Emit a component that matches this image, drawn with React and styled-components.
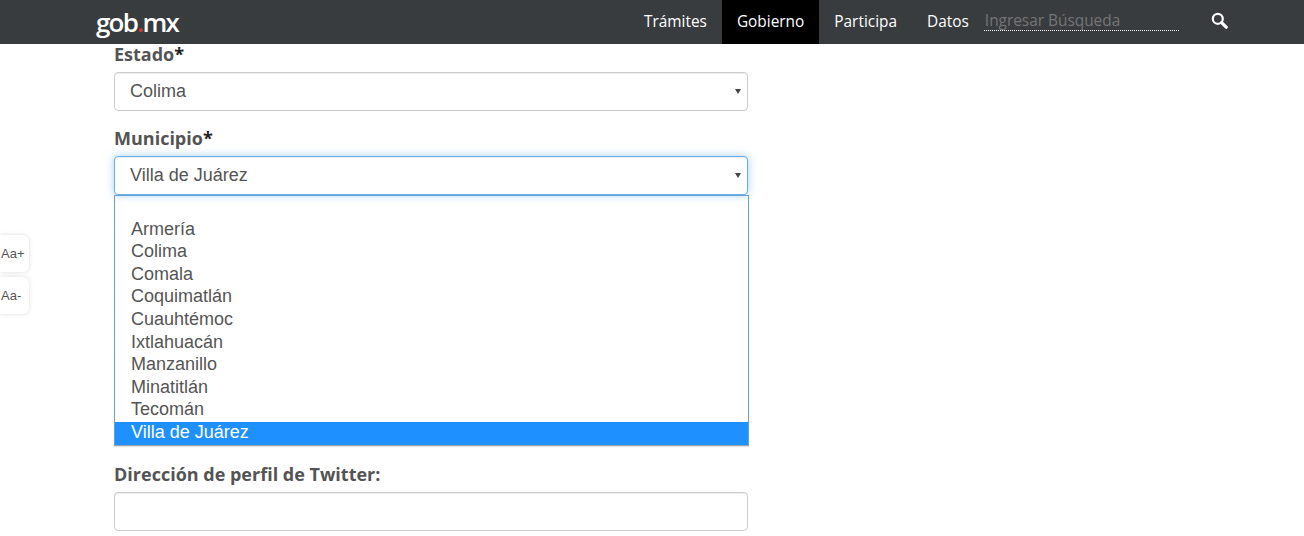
import styled, { createGlobalStyle } from "styled-components";

const GlobalStyle = createGlobalStyle`
    html, body {
        margin:0;
        padding:0;
        background:white;
        height:536px;
        overflow:hidden;
    }
`

const municipios = ["", "Armería", "Colima", "Comala", "Coquimatlán", "Cuauhtémoc", "Ixtlahuacán", "Manzanillo", "Minatitlán", "Tecomán", "Villa de Juárez"];
const navLinks = ["Trámites", "Gobierno", "Participa", "Datos"];

const SearchIcon = () => (
    <svg width="17" height="17" viewBox="0 0 17 17" fill="none" stroke="white">
        <circle cx="6.8" cy="6.8" r="5" strokeWidth="2.2" />
        <path d="M10.6 10.6L15.2 15.2" strokeWidth="3.2" strokeLinecap="round" />
    </svg>
)

const Caret = () => (
    <CaretIcon width="6" height="6" viewBox="0 0 6 6">
        <path d="M0 1H6L3 6Z" fill="#444" />
    </CaretIcon>
)

const App = () => {
    return (
        <Page>
            <GlobalStyle />
            <Navbar>
                <Logo>gob<LogoDot>.</LogoDot>mx</Logo>
                <NavLinks>
                    {navLinks.map((link) => (
                        <NavLink key={link} $active={link === "Gobierno"}>{link}</NavLink>
                    ))}
                </NavLinks>
                <SearchInput placeholder="Ingresar Búsqueda" />
                <SearchButton><SearchIcon /></SearchButton>
            </Navbar>
            <Form>
                <Label>Estado<Required>*</Required></Label>
                <Select>Colima<Caret /></Select>
                <Label $top={17}>Municipio<Required>*</Required></Label>
                <Select $focused>Villa de Juárez<Caret /></Select>
                <ListBox>
                    {municipios.map((name) => (
                        <Option key={name} $selected={name === "Villa de Juárez"}>{name}</Option>
                    ))}
                </ListBox>
                <Label $top={18}>Dirección de perfil de Twitter:</Label>
                <TextInput />
            </Form>
            <SizeButtons>
                <SizeButton>Aa+</SizeButton>
                <SizeButton>Aa-</SizeButton>
            </SizeButtons>
        </Page>
    )
}

const Page = styled.div`
    position:relative;
    width:1304px;
    height:536px;
    overflow:hidden;
    background:white;
`

const Navbar = styled.header`
    display:flex;
    align-items:center;
    height:44px;
    padding-left:96px;
    background-color:#393c3f;
`

const Logo = styled.div`
    width:533px;
    margin-top:-1px;
    font-family:"Open Sans", sans-serif;
    font-size:26px;
    font-weight:600;
    letter-spacing:-1.8px;
    color:white;
`

const LogoDot = styled.span`
    color:#d0402f;
`

const NavLinks = styled.nav`
    display:flex;
    height:44px;
`

const NavLink = styled.a`
    display:flex;
    align-items:center;
    padding:0 15px 2px;
    font-family:"Open Sans", sans-serif;
    font-size:15.4px;
    font-weight:400;
    color:white;
    background-color:${(props) => (props.$active ? "black" : "transparent")};
`

const SearchInput = styled.input`
    width:195px;
    height:20px;
    margin:0 0 3px 0;
    padding:0 1px;
    box-sizing:border-box;
    border:none;
    border-bottom:1px dotted white;
    outline:none;
    background:transparent;
    font-family:"Open Sans", sans-serif;
    font-size:15.4px;
    color:white;

    &::placeholder {
        color:#757575;
        opacity:1;
    }
`

const SearchButton = styled.div`
    display:flex;
    margin:-3px 0 0 32px;
`

const Form = styled.main`
    display:flex;
    flex-direction:column;
    width:634px;
    margin-left:114px;
`

const Label = styled.label`
    height:28px;
    margin-top:${(props) => props.$top || 0}px;
    font-family:"Open Sans", sans-serif;
    font-size:18px;
    font-weight:700;
    line-height:21px;
    color:#545454;
`

const Required = styled.span`
    color:#222222;
`

const Select = styled.div`
    position:relative;
    display:flex;
    align-items:center;
    height:39px;
    padding:0 15px;
    box-sizing:border-box;
    border:1px solid ${(props) => (props.$focused ? "#66afe9" : "#cccccc")};
    border-radius:4px;
    box-shadow:${(props) => (props.$focused
        ? "inset 0 1px 1px rgba(0,0,0,.075), 0 0 8px rgba(102,175,233,.6)"
        : "inset 0 1px 1px rgba(0,0,0,.075)")};
    font-family:"Liberation Sans", sans-serif;
    font-size:18px;
    color:#555555;
    background:white;
`

const CaretIcon = styled.svg`
    position:absolute;
    right:6px;
    top:15px;
`

const ListBox = styled.ul`
    width:635px;
    height:251px;
    margin:0;
    padding:0;
    box-sizing:border-box;
    list-style:none;
    border:1px solid #6b9fd9;
    border-bottom-color:#9aa5b1;
    box-shadow:0 1px 1px rgba(0,0,0,.12);
    background:white;
    font-family:"Liberation Sans", sans-serif;
    font-size:18px;
    color:#555555;
`

const Option = styled.li`
    height:22.6px;
    padding-left:16px;
    line-height:21px;
    color:${(props) => (props.$selected ? "white" : "#555555")};
    background-color:${(props) => (props.$selected ? "#1e90ff" : "transparent")};
`

const TextInput = styled.input`
    height:39px;
    padding:0 15px;
    box-sizing:border-box;
    border:1px solid #cccccc;
    border-radius:4px;
    outline:none;
    box-shadow:inset 0 1px 1px rgba(0,0,0,.075);
`

const SizeButtons = styled.div`
    position:absolute;
    left:0;
    top:235px;
    display:flex;
    flex-direction:column;
    gap:5px;
`

const SizeButton = styled.div`
    display:flex;
    align-items:center;
    width:29px;
    height:37px;
    padding-left:1px;
    box-sizing:border-box;
    border-radius:0 6px 6px 0;
    box-shadow:0 0 4px rgba(0,0,0,.15);
    font-family:"Liberation Sans", sans-serif;
    font-size:13px;
    color:#555555;
    background:white;
`

export default App;
